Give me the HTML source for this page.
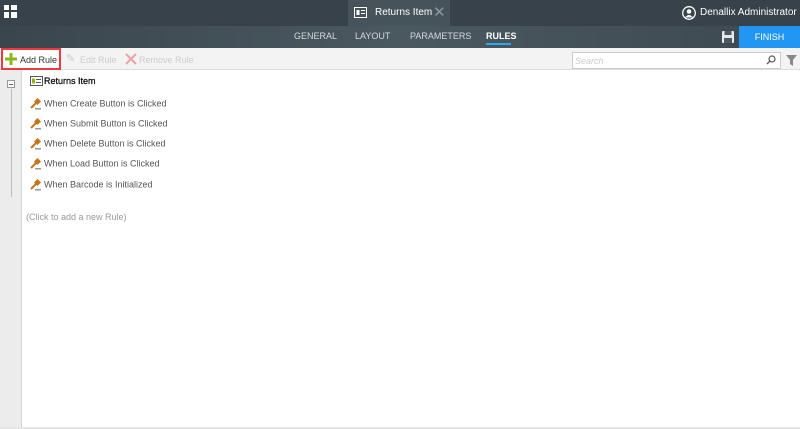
<!DOCTYPE html>
<html><head><meta charset="utf-8"><style>
*{margin:0;padding:0;box-sizing:border-box}
body{width:800px;height:429px;overflow:hidden;background:#fff;font-family:"Liberation Sans",sans-serif;position:relative}
.a{position:absolute}
.top{left:0;top:0;width:800px;height:26px;background:#37424a}
.nav{left:0;top:26px;width:800px;height:22px;background:linear-gradient(90deg,#3a464e,#4a5861 50%,#3d4950)}
.tab{left:348px;top:0;width:102px;height:26px;background:#46535b;color:#fff;font-size:10px}
.nv{top:31px;color:#d5dadd;font-size:9px}
.tb{left:0;top:48px;width:800px;height:22px;background:#f3f3f3;border-bottom:1px solid #ddd}
.gut{left:0;top:70px;width:22px;height:357px;background:#ececec;border-right:1px solid #d6d6d6}
.rule{left:30px;font-size:9px;color:#555}
.ham{display:inline-block;width:12px;height:12px;vertical-align:middle;margin-right:2px}
</style></head><body>
<div class="a top"></div>
<div class="a nav"></div>
<svg class="a" style="left:4px;top:5px" width="14" height="14"><rect x="0" y="0" width="5" height="5" fill="#fff"/><rect x="7" y="0" width="6" height="5" fill="#fff"/><rect x="0" y="7" width="5" height="6" fill="#fff"/><rect x="7" y="7" width="6" height="6" fill="#fff"/></svg>
<div class="a tab">
<svg class="a" style="left:6px;top:7px" width="13" height="11"><rect x="0.5" y="0.5" width="12" height="10" fill="none" stroke="#fff"/><rect x="2.5" y="3" width="3" height="5" fill="#fff"/><rect x="7" y="3" width="4" height="1" fill="#fff"/><rect x="7" y="6" width="4" height="1" fill="#fff"/></svg>
<span class="a" style="left:27px;top:7px">Returns Item</span>
<span class="a" style="left:85px;top:3px;color:#8e989e;font-size:15px">✕</span>
</div>
<svg class="a" style="left:682px;top:6px" width="14" height="14"><circle cx="7" cy="7" r="6.3" fill="none" stroke="#fff" stroke-width="1.3"/><circle cx="7" cy="5.5" r="2.3" fill="#fff"/><path d="M3 11.5 Q7 6.5 11 11.5" fill="#fff"/></svg>
<span class="a" style="left:700px;top:7px;color:#fff;font-size:10px">Denallix Administrator</span>
<span class="a nv" style="left:294px">GENERAL</span>
<span class="a nv" style="left:355px">LAYOUT</span>
<span class="a nv" style="left:410px">PARAMETERS</span>
<span class="a nv" style="left:486px;color:#fff;font-weight:bold">RULES</span>
<div class="a" style="left:486px;top:43px;width:25px;height:2px;background:#29a8f0"></div>
<svg class="a" style="left:722px;top:31px" width="12" height="12"><rect x="0" y="0" width="12" height="12" rx="1" fill="#e8e8e8"/><rect x="2.5" y="0" width="7" height="4" fill="#4a5861"/><rect x="2" y="7" width="8" height="5" fill="#4a5861"/></svg>
<div class="a" style="left:739px;top:26px;width:61px;height:22px;background:#2196f3;color:#fff;font-size:9px;text-align:center;line-height:22px">FINISH</div>
<div class="a tb"></div>
<div class="a" style="left:1px;top:48px;width:60px;height:22px;border:2px solid #f0383f;background:#fff"></div>
<svg class="a" style="left:5px;top:53px" width="12" height="12"><rect x="4.5" y="0" width="3" height="12" fill="#8cb51e"/><rect x="0" y="4.5" width="12" height="3" fill="#8cb51e"/></svg>
<span class="a" style="left:20px;top:55px;font-size:9px;color:#333">Add Rule</span>
<span class="a" style="left:66px;top:52px;font-size:11px;color:#ccc">✎</span>
<span class="a" style="left:80px;top:55px;font-size:9px;color:#ccc">Edit Rule</span>
<svg class="a" style="left:125px;top:53px" width="12" height="12"><path d="M1 1 L11 11 M11 1 L1 11" stroke="#f0a0a0" stroke-width="2"/></svg>
<span class="a" style="left:139px;top:55px;font-size:9px;color:#ccc">Remove Rule</span>
<div class="a" style="left:572px;top:52px;width:209px;height:17px;border:1px solid #ccc;background:#fff"></div>
<span class="a" style="left:575px;top:56px;font-size:9px;color:#ccc;font-style:italic">Search</span>
<svg class="a" style="left:766px;top:55px" width="10" height="10"><circle cx="6" cy="4" r="3" fill="none" stroke="#555" stroke-width="1.2"/><path d="M4 6 L1 9" stroke="#555" stroke-width="1.3"/></svg>
<svg class="a" style="left:786px;top:55px" width="11" height="11"><path d="M0 0 H11 L7 5 V11 L4 9 V5 Z" fill="#888"/></svg>
<div class="a gut"></div>
<div class="a" style="left:7px;top:80px;width:8px;height:8px;border:1px solid #999;background:#fff"></div>
<div class="a" style="left:9px;top:84px;width:4px;height:1px;background:#666"></div>
<div class="a" style="left:11px;top:89px;width:1px;height:108px;background:#bbb"></div>
<svg class="a" style="left:30px;top:76px" width="13" height="10"><rect x="0.5" y="0.5" width="12" height="9" fill="#fff" stroke="#555"/><rect x="2" y="2.5" width="3" height="5" fill="#8cb51e"/><rect x="6" y="3" width="5" height="1" fill="#555"/><rect x="6" y="6" width="5" height="1" fill="#555"/></svg>
<span class="a" style="left:44px;top:76px;font-size:9px;color:#111;-webkit-text-stroke:0.3px #111">Returns Item</span>
<div class="a rule" style="top:98px"><svg class="ham" viewBox="0 0 12 12"><path d="M1 10 L6 5" stroke="#c8741f" stroke-width="2"/><rect x="5" y="1" width="5" height="5" transform="rotate(45 7.5 3.5)" fill="#c8741f"/><rect x="5" y="10" width="6" height="1.5" fill="#999"/></svg>When Create Button is Clicked</div>
<div class="a rule" style="top:118px"><svg class="ham" viewBox="0 0 12 12"><path d="M1 10 L6 5" stroke="#c8741f" stroke-width="2"/><rect x="5" y="1" width="5" height="5" transform="rotate(45 7.5 3.5)" fill="#c8741f"/><rect x="5" y="10" width="6" height="1.5" fill="#999"/></svg>When Submit Button is Clicked</div>
<div class="a rule" style="top:138px"><svg class="ham" viewBox="0 0 12 12"><path d="M1 10 L6 5" stroke="#c8741f" stroke-width="2"/><rect x="5" y="1" width="5" height="5" transform="rotate(45 7.5 3.5)" fill="#c8741f"/><rect x="5" y="10" width="6" height="1.5" fill="#999"/></svg>When Delete Button is Clicked</div>
<div class="a rule" style="top:158px"><svg class="ham" viewBox="0 0 12 12"><path d="M1 10 L6 5" stroke="#c8741f" stroke-width="2"/><rect x="5" y="1" width="5" height="5" transform="rotate(45 7.5 3.5)" fill="#c8741f"/><rect x="5" y="10" width="6" height="1.5" fill="#999"/></svg>When Load Button is Clicked</div>
<div class="a rule" style="top:179px"><svg class="ham" viewBox="0 0 12 12"><path d="M1 10 L6 5" stroke="#c8741f" stroke-width="2"/><rect x="5" y="1" width="5" height="5" transform="rotate(45 7.5 3.5)" fill="#c8741f"/><rect x="5" y="10" width="6" height="1.5" fill="#999"/></svg>When Barcode is Initialized</div>
<span class="a" style="left:26px;top:212px;font-size:9px;color:#999">(Click to add a new Rule)</span>
<div class="a" style="left:0;top:427px;width:800px;height:2px;background:#e6e6e6"></div>
</body></html>
